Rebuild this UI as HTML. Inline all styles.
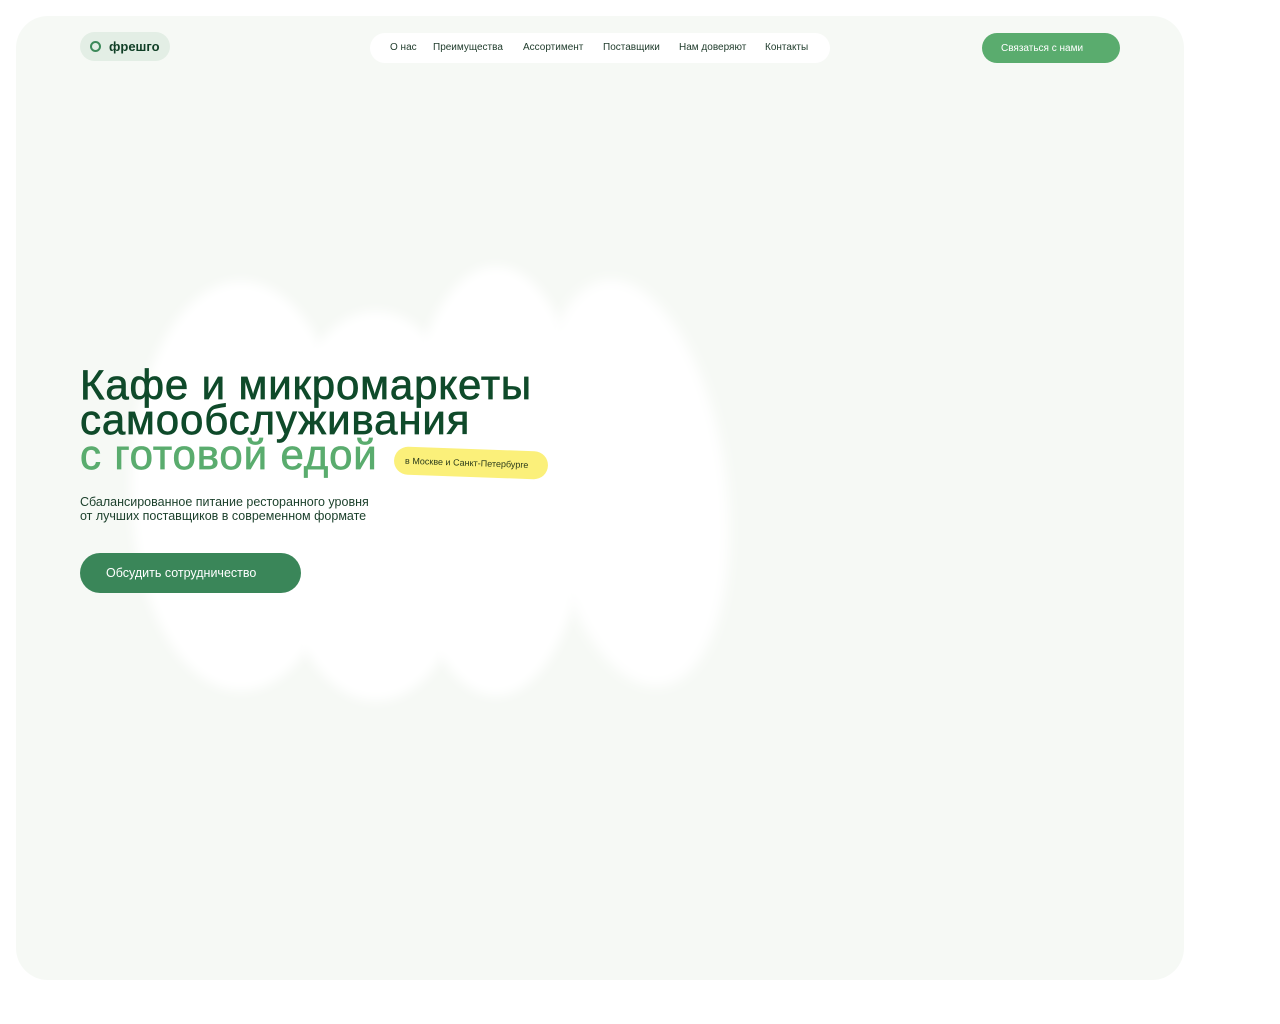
<!DOCTYPE html>
<html><head><meta charset="utf-8"><style>
body{margin:0;width:1280px;height:1024px;background:#fff;font-family:"Liberation Sans",sans-serif;position:relative;overflow:hidden}
.card{position:absolute;left:16px;top:16px;width:1168px;height:964px;background:#f6f9f5;border-radius:32px;overflow:hidden}
.blob{position:absolute;background:#fff;border-radius:50%;filter:blur(6px)}
.logo{position:absolute;left:80px;top:32px;width:90px;height:29px;border-radius:15px;background:#e3eee5;font-size:13px;color:#103f26;font-weight:bold}
.logo span{position:absolute;left:29px;top:7px}
.logo i{position:absolute;left:10px;top:9px;width:7px;height:7px;border:2.5px solid #3d8a5a;border-radius:50%}
.nav{position:absolute;left:370px;top:33px;width:460px;height:30px;border-radius:15px;background:#fff;font-size:10px;color:#1e3a2a}
.nav span{position:absolute;top:9px}
.cta{position:absolute;left:982px;top:33px;width:138px;height:30px;border-radius:15px;background:#5aac6e;color:#fff;font-size:10px}
.cta span{position:absolute;left:19px;top:10px}
h1{position:absolute;left:80px;top:367px;margin:0;font-size:42px;line-height:35px;font-weight:normal;color:#0f4a2a;letter-spacing:0.85px;-webkit-text-stroke:0.7px #0f4a2a}
h1 .g{color:#5aac6e;-webkit-text-stroke:0.7px #5aac6e}
.tag{position:absolute;left:394px;top:449px;width:154px;height:28px;background:#fbf07a;border-radius:14px;transform:rotate(2deg);font-size:9px;color:#2a3a1a}
.tag span{position:absolute;left:11px;top:9px}
p{position:absolute;left:80px;top:495px;margin:0;font-size:12.5px;line-height:14px;color:#1a3f2a}
.btn{position:absolute;left:80px;top:553px;width:221px;height:40px;border-radius:20px;background:#3a8659;color:#fff;font-size:12.5px}
.btn span{position:absolute;left:26px;top:13px}
</style></head><body>
<div class="card">
<div class="blob" style="left:115px;top:265px;width:220px;height:410px"></div>
<div class="blob" style="left:255px;top:295px;width:210px;height:390px"></div>
<div class="blob" style="left:385px;top:250px;width:190px;height:430px"></div>
<div class="blob" style="left:525px;top:262px;width:185px;height:410px;transform:rotate(-8deg)"></div>
</div>
<div class="logo"><i></i><span>фрешго</span></div>
<div class="nav"><span style="left:20px">О нас</span><span style="left:63px">Преимущества</span><span style="left:153px">Ассортимент</span><span style="left:233px">Поставщики</span><span style="left:309px">Нам доверяют</span><span style="left:395px">Контакты</span></div>
<div class="cta"><span>Связаться с нами</span></div>
<h1>Кафе и микромаркеты<br>самообслуживания<br><span class="g">с готовой едой</span></h1>
<div class="tag"><span>в Москве и Санкт-Петербурге</span></div>
<p>Сбалансированное питание ресторанного уровня<br>от лучших поставщиков в современном формате</p>
<div class="btn"><span>Обсудить сотрудничество</span></div>
</body></html>
